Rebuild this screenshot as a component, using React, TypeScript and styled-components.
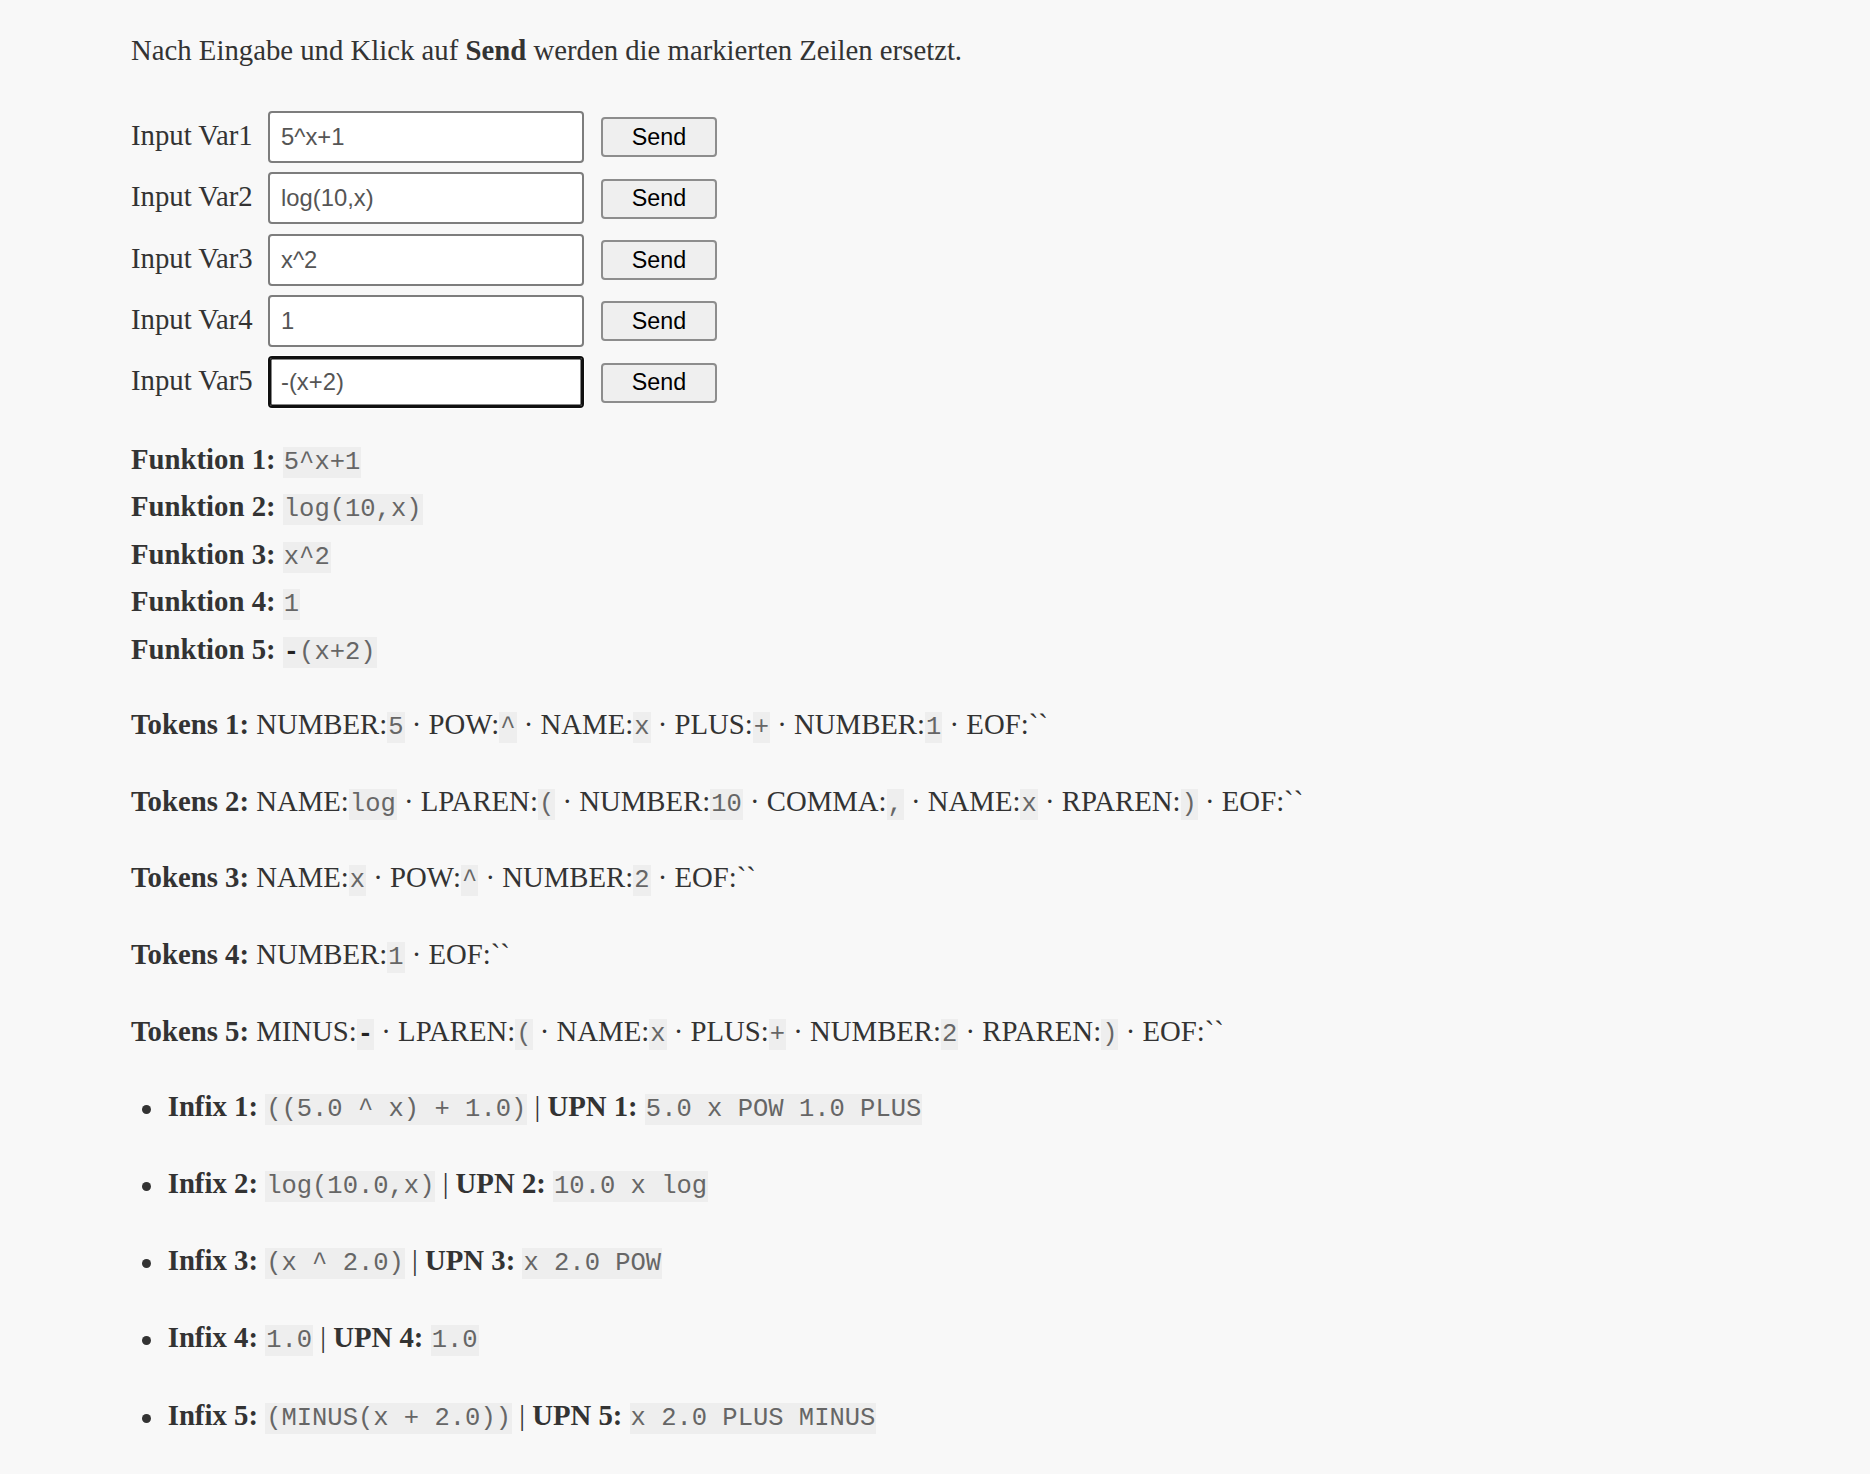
import React, { useState } from "react";
import styled, { createGlobalStyle } from "styled-components";

const GlobalStyle = createGlobalStyle`
  html, body {
    margin: 0;
    background: #f8f8f8;
  }
  body {
    color: #333333;
    font-family: "Liberation Serif", "Times New Roman", serif;
    font-size: 28.75px;
  }
`;

const Page = styled.div`
  padding: 26.6px 40px 60px 131px;
`;

const Intro = styled.p`
  margin: 0;
  line-height: 47.5px;
`;

const Form = styled.div`
  margin-top: 36.9px;
  display: flex;
  flex-direction: column;
  gap: 9.3px;
`;

const Row = styled.div`
  display: flex;
  align-items: baseline;
`;

const Label = styled.label`
  width: 137px;
  flex-shrink: 0;
  line-height: 47.5px;
`;

const Field = styled.input<{ $active?: boolean }>`
  box-sizing: border-box;
  width: 316px;
  height: 52px;
  padding: 0 11px;
  border: 2px solid ${(p) => (p.$active ? "#101010" : "#7d7d7d")};
  border-radius: 4px;
  background: #ffffff;
  color: #555555;
  font-family: "Liberation Sans", Arial, sans-serif;
  font-size: 23.8px;
  outline: none;
  box-shadow: ${(p) =>
    p.$active ? "inset 0 0 0 1.5px #101010, 0 0 0 1px #ffffff" : "none"};
`;

const SendButton = styled.button`
  box-sizing: border-box;
  width: 116px;
  height: 40px;
  margin-left: 17px;
  padding: 0;
  border: 2px solid #8d8d8d;
  border-radius: 4px;
  background: #efefef;
  color: #000000;
  font-family: "Liberation Sans", Arial, sans-serif;
  font-size: 23.3px;
  cursor: pointer;
`;

const Functions = styled.div`
  margin-top: 27.7px;
`;

const Line = styled.div`
  line-height: 47.5px;
  white-space: nowrap;
`;

const Code = styled.code`
  font-family: "Liberation Mono", "Courier New", monospace;
  font-size: 25.5px;
  line-height: normal;
  padding: 1px 1px;
  background: #eeeeee;
  color: #666666;
`;

const Dash = styled.span`
  font-weight: 700;
  color: #222222;
`;

const TokenBlock = styled.div`
  margin-top: 27.5px;
  display: flex;
  flex-direction: column;
  gap: 29.2px;
`;

const List = styled.ul`
  margin: 27.4px 0 0 10.7px;
  padding: 0;
  list-style: none;
  display: flex;
  flex-direction: column;
  gap: 29.8px;
`;

const Item = styled.li`
  line-height: 47.5px;
  white-space: nowrap;

  &::before {
    content: "";
    display: inline-block;
    width: 9px;
    height: 9px;
    margin-right: 17px;
    border-radius: 50%;
    background: #333333;
    vertical-align: 2px;
  }
`;

type Token = [string, string];

const tokens: Token[][] = [
  [["NUMBER", "5"], ["POW", "^"], ["NAME", "x"], ["PLUS", "+"], ["NUMBER", "1"]],
  [
    ["NAME", "log"],
    ["LPAREN", "("],
    ["NUMBER", "10"],
    ["COMMA", ","],
    ["NAME", "x"],
    ["RPAREN", ")"],
  ],
  [["NAME", "x"], ["POW", "^"], ["NUMBER", "2"]],
  [["NUMBER", "1"]],
  [
    ["MINUS", "-"],
    ["LPAREN", "("],
    ["NAME", "x"],
    ["PLUS", "+"],
    ["NUMBER", "2"],
    ["RPAREN", ")"],
  ],
];

const results = [
  { infix: "((5.0 ^ x) + 1.0)", upn: "5.0 x POW 1.0 PLUS" },
  { infix: "log(10.0,x)", upn: "10.0 x log" },
  { infix: "(x ^ 2.0)", upn: "x 2.0 POW" },
  { infix: "1.0", upn: "1.0" },
  { infix: "(MINUS(x + 2.0))", upn: "x 2.0 PLUS MINUS" },
];

const initial = ["5^x+1", "log(10,x)", "x^2", "1", "-(x+2)"];

// "-" am Anfang wird im Original fett dargestellt
const renderCode = (value: string) =>
  value.startsWith("-") ? (
    <Code>
      <Dash>-</Dash>
      {value.slice(1)}
    </Code>
  ) : (
    <Code>{value}</Code>
  );

export default function App() {
  const [inputs, setInputs] = useState<string[]>(initial);
  const [funcs, setFuncs] = useState<string[]>(initial);

  const change = (i: number, v: string) => {
    const next = [...inputs];
    next[i] = v;
    setInputs(next);
  };

  const send = (i: number) => {
    const next = [...funcs];
    next[i] = inputs[i];
    setFuncs(next);
  };

  return (
    <Page>
      <GlobalStyle />
      <Intro>
        Nach Eingabe und Klick auf <b>Send</b> werden die markierten Zeilen ersetzt.
      </Intro>

      <Form>
        {inputs.map((v, i) => (
          <Row key={i}>
            <Label htmlFor={`var${i + 1}`}>Input Var{i + 1}</Label>
            <Field
              id={`var${i + 1}`}
              value={v}
              $active={i === 4}
              onChange={(e) => change(i, e.target.value)}
            />
            <SendButton onClick={() => send(i)}>Send</SendButton>
          </Row>
        ))}
      </Form>

      <Functions>
        {funcs.map((f, i) => (
          <Line key={i}>
            <b>Funktion {i + 1}:</b> {renderCode(f)}
          </Line>
        ))}
      </Functions>

      <TokenBlock>
        {tokens.map((list, i) => (
          <Line key={i}>
            <b>Tokens {i + 1}:</b>{" "}
            {list.map(([type, val], j) => (
              <React.Fragment key={j}>
                {type}:{renderCode(val)}
                {" · "}
              </React.Fragment>
            ))}
            EOF:``
          </Line>
        ))}
      </TokenBlock>

      <List>
        {results.map((r, i) => (
          <Item key={i}>
            <b>Infix {i + 1}:</b> <Code>{r.infix}</Code> | <b>UPN {i + 1}:</b>{" "}
            <Code>{r.upn}</Code>
          </Item>
        ))}
      </List>
    </Page>
  );
}
